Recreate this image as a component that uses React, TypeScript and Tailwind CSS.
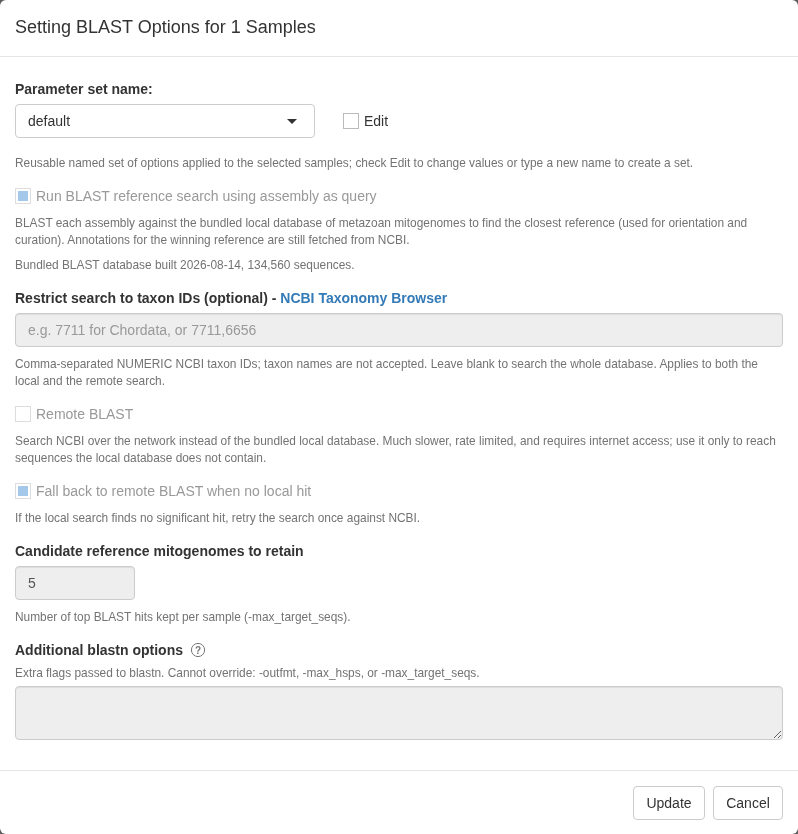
import { FC, ReactNode } from "react";

const inputClass =
  "block h-[34px] rounded-[4px] border border-[#ccc] bg-[#eee] px-3 py-[6px] text-sm leading-[20px] text-[#555] shadow-[inset_0_1px_1px_rgba(0,0,0,0.075)] placeholder:text-[#999] outline-none";

const buttonClass =
  "h-[34px] rounded-[4px] border border-[#ccc] bg-white text-sm text-[#333]";

const Help: FC<{ className?: string; children: ReactNode }> = ({
  className = "",
  children,
}) => (
  <p className={`text-[11.9px] leading-[17px] text-[#737373] ${className}`}>
    {children}
  </p>
);

const Label: FC<{ className?: string; children: ReactNode }> = ({
  className = "",
  children,
}) => (
  <div className={`text-sm leading-[20px] font-bold text-[#333] ${className}`}>
    {children}
  </div>
);

const CheckRow: FC<{ label: string; checked?: boolean; className?: string }> = ({
  label,
  checked,
  className = "",
}) => (
  <div className={`flex h-5 items-center text-sm text-[#999] ${className}`}>
    <span className="mr-[5px] flex h-4 w-4 items-center justify-center border border-[#ddd] bg-white">
      {checked && <span className="h-[10px] w-[10px] bg-[#a3c8ea]" />}
    </span>
    {label}
  </div>
);

export default function App() {
  return (
    <div className="h-[834px] overflow-hidden bg-[#5c5c5c] font-['Liberation_Sans',Arial,sans-serif]">
      <div className="h-[834px] overflow-hidden rounded-[6px] bg-white text-[#333] will-change-transform">
        <div className="border-b border-[#e5e5e5] px-[15px] pt-[14px] pb-[16px]">
          <h4 className="text-lg leading-[26px] font-normal text-[#333]">
            Setting BLAST Options for 1 Samples
          </h4>
        </div>

        <div className="h-[713px] px-[15px] pt-[22px]">
          <Label className="mb-[5px]">Parameter set name:</Label>
          <div className="flex items-center">
            <div className="flex h-[34px] w-[300px] items-center justify-between rounded-[4px] border border-[#ccc] bg-white pr-[17px] pl-3 text-sm text-[#333]">
              <span>default</span>
              <span className="h-0 w-0 border-x-[5px] border-t-[5px] border-x-transparent border-t-[#333]" />
            </div>
            <div className="ml-[28px] flex items-center text-sm text-[#333]">
              <span className="mr-[5px] h-4 w-4 border border-[#bbb] bg-white" />
              Edit
            </div>
          </div>
          <Help className="mt-[17px]">
            Reusable named set of options applied to the selected samples; check
            Edit to change values or type a new name to create a set.
          </Help>

          <CheckRow
            className="mt-[14px]"
            checked
            label="Run BLAST reference search using assembly as query"
          />
          <Help className="mt-[9px]">
            BLAST each assembly against the bundled local database of metazoan
            mitogenomes to find the closest reference (used for orientation and
            curation). Annotations for the winning reference are still fetched
            from NCBI.
          </Help>
          <Help className="mt-2">
            Bundled BLAST database built 2026-08-14, 134,560 sequences.
          </Help>

          <Label className="mt-[14px] mb-[5px]">
            Restrict search to taxon IDs (optional) -{" "}
            <a className="text-[#337ab7]">NCBI Taxonomy Browser</a>
          </Label>
          <input
            disabled
            className={`${inputClass} w-full`}
            placeholder="e.g. 7711 for Chordata, or 7711,6656"
          />
          <Help className="mt-[9px]">
            Comma-separated NUMERIC NCBI taxon IDs; taxon names are not
            accepted. Leave blank to search the whole database. Applies to both
            the local and the remote search.
          </Help>

          <CheckRow className="mt-[14px]" label="Remote BLAST" />
          <Help className="mt-[9px]">
            Search NCBI over the network instead of the bundled local database.
            Much slower, rate limited, and requires internet access; use it only
            to reach sequences the local database does not contain.
          </Help>

          <CheckRow
            className="mt-[14px]"
            checked
            label="Fall back to remote BLAST when no local hit"
          />
          <Help className="mt-[9px]">
            If the local search finds no significant hit, retry the search once
            against NCBI.
          </Help>

          <Label className="mt-[14px] mb-[5px]">
            Candidate reference mitogenomes to retain
          </Label>
          <input disabled className={`${inputClass} w-[120px]`} value="5" readOnly />
          <Help className="mt-[9px]">
            Number of top BLAST hits kept per sample (-max_target_seqs).
          </Help>

          <Label className="mt-[14px] flex items-center">
            Additional blastn options
            <svg
              className="ml-[7px]"
              width="16"
              height="16"
              viewBox="0 0 16 16"
              fill="none"
            >
              <circle cx="8" cy="8" r="6.6" stroke="#777" strokeWidth="1" />
              <text
                x="8"
                y="11.5"
                textAnchor="middle"
                fontSize="10"
                fontWeight="700"
                fill="#777"
              >
                ?
              </text>
            </svg>
          </Label>
          <Help className="mt-[5px] mb-[4px]">
            Extra flags passed to blastn. Cannot override: -outfmt, -max_hsps,
            or -max_target_seqs.
          </Help>
          <textarea disabled className={`${inputClass} h-[54px] w-full`} />
        </div>

        <div className="flex justify-end gap-2 border-t border-[#e5e5e5] p-[15px]">
          <button className={`${buttonClass} w-[72px]`}>Update</button>
          <button className={`${buttonClass} w-[70px]`}>Cancel</button>
        </div>
      </div>
    </div>
  );
}
